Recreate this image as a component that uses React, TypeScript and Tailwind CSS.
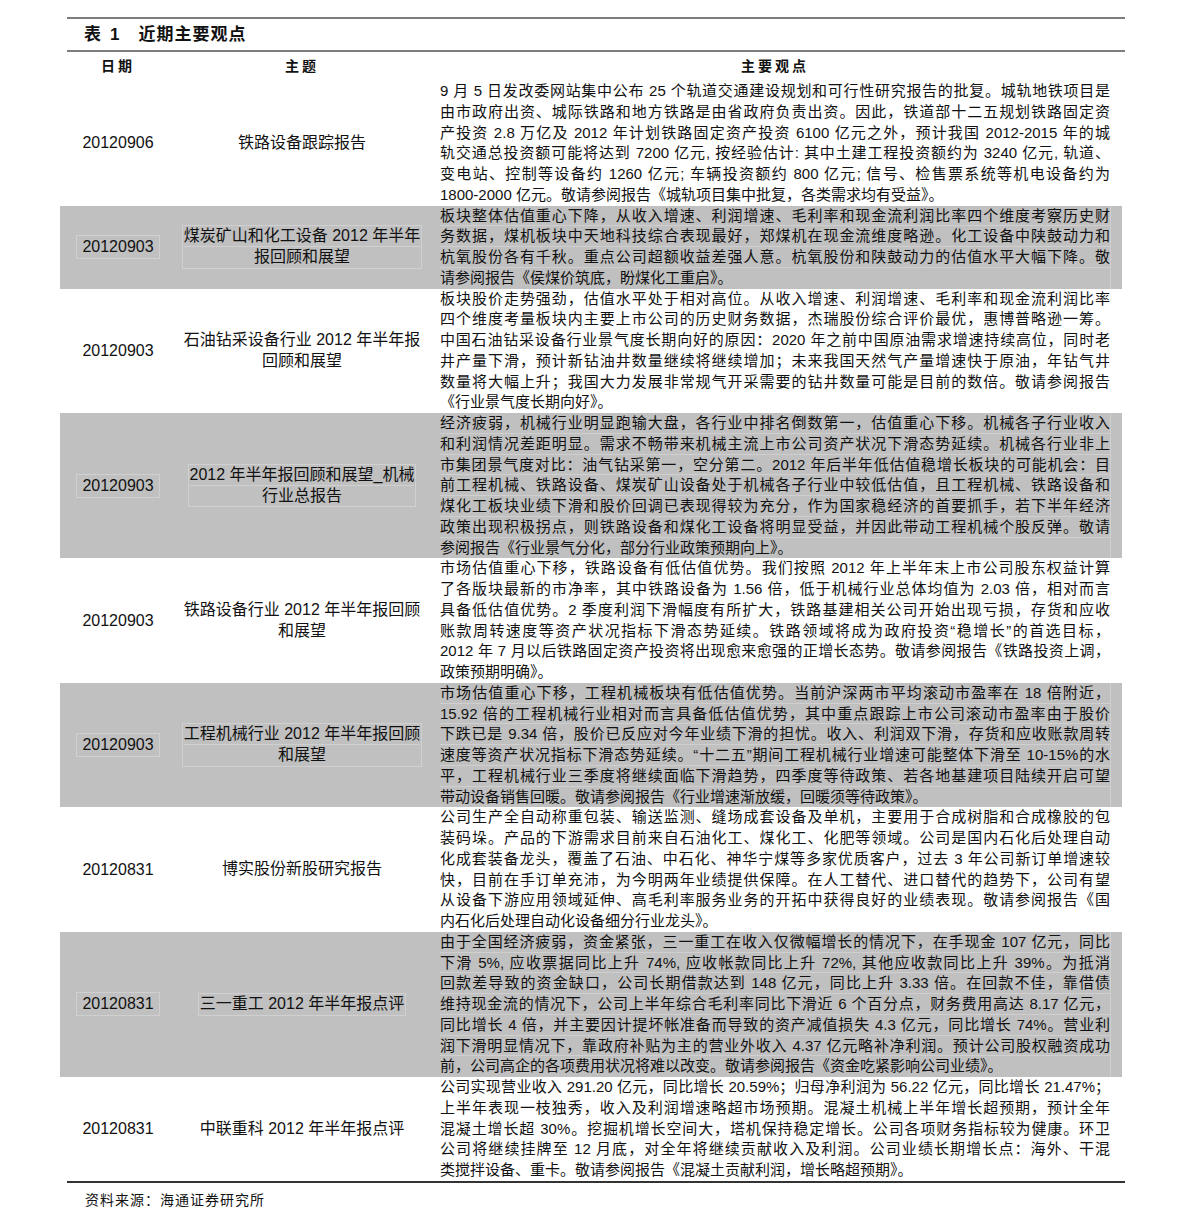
import React from 'react';

type Row = {
  date: string;
  topic: string[];
  lines: string[];
  shaded?: boolean;
};

const rows: Row[] = [
  {
    date: '20120906',
    topic: ['铁路设备跟踪报告'],
    lines: [
      '9 月 5 日发改委网站集中公布 25 个轨道交通建设规划和可行性研究报告的批复。城轨地铁项目是',
      '由市政府出资、城际铁路和地方铁路是由省政府负责出资。因此，铁道部十二五规划铁路固定资',
      '产投资 2.8 万亿及 2012 年计划铁路固定资产投资 6100 亿元之外，预计我国 2012-2015 年的城',
      '轨交通总投资额可能将达到 7200 亿元, 按经验估计: 其中土建工程投资额约为 3240 亿元, 轨道、',
      '变电站、控制等设备约 1260 亿元; 车辆投资额约 800 亿元; 信号、检售票系统等机电设备约为',
      '1800-2000 亿元。敬请参阅报告《城轨项目集中批复，各类需求均有受益》。',
    ],
  },
  {
    date: '20120903',
    topic: ['煤炭矿山和化工设备 2012 年半年', '报回顾和展望'],
    shaded: true,
    lines: [
      '板块整体估值重心下降，从收入增速、利润增速、毛利率和现金流利润比率四个维度考察历史财',
      '务数据，煤机板块中天地科技综合表现最好，郑煤机在现金流维度略逊。化工设备中陕鼓动力和',
      '杭氧股份各有千秋。重点公司超额收益差强人意。杭氧股份和陕鼓动力的估值水平大幅下降。敬',
      '请参阅报告《侯煤价筑底，盼煤化工重启》。',
    ],
  },
  {
    date: '20120903',
    topic: ['石油钻采设备行业 2012 年半年报', '回顾和展望'],
    lines: [
      '板块股价走势强劲，估值水平处于相对高位。从收入增速、利润增速、毛利率和现金流利润比率',
      '四个维度考量板块内主要上市公司的历史财务数据，杰瑞股份综合评价最优，惠博普略逊一筹。',
      '中国石油钻采设备行业景气度长期向好的原因：2020 年之前中国原油需求增速持续高位，同时老',
      '井产量下滑，预计新钻油井数量继续将继续增加；未来我国天然气产量增速快于原油，年钻气井',
      '数量将大幅上升；我国大力发展非常规气开采需要的钻井数量可能是目前的数倍。敬请参阅报告',
      '《行业景气度长期向好》。',
    ],
  },
  {
    date: '20120903',
    topic: ['2012 年半年报回顾和展望_机械', '行业总报告'],
    shaded: true,
    lines: [
      '经济疲弱，机械行业明显跑输大盘，各行业中排名倒数第一，估值重心下移。机械各子行业收入',
      '和利润情况差距明显。需求不畅带来机械主流上市公司资产状况下滑态势延续。机械各行业非上',
      '市集团景气度对比：油气钻采第一，空分第二。2012 年后半年低估值稳增长板块的可能机会：目',
      '前工程机械、铁路设备、煤炭矿山设备处于机械各子行业中较低估值，且工程机械、铁路设备和',
      '煤化工板块业绩下滑和股价回调已表现得较为充分，作为国家稳经济的首要抓手，若下半年经济',
      '政策出现积极拐点，则铁路设备和煤化工设备将明显受益，并因此带动工程机械个股反弹。敬请',
      '参阅报告《行业景气分化，部分行业政策预期向上》。',
    ],
  },
  {
    date: '20120903',
    topic: ['铁路设备行业 2012 年半年报回顾', '和展望'],
    lines: [
      '市场估值重心下移，铁路设备有低估值优势。我们按照 2012 年上半年末上市公司股东权益计算',
      '了各版块最新的市净率，其中铁路设备为 1.56 倍，低于机械行业总体均值为 2.03 倍，相对而言',
      '具备低估值优势。2 季度利润下滑幅度有所扩大，铁路基建相关公司开始出现亏损，存货和应收',
      '账款周转速度等资产状况指标下滑态势延续。铁路领域将成为政府投资“稳增长”的首选目标，',
      '2012 年 7 月以后铁路固定资产投资将出现愈来愈强的正增长态势。敬请参阅报告《铁路投资上调，',
      '政策预期明确》。',
    ],
  },
  {
    date: '20120903',
    topic: ['工程机械行业 2012 年半年报回顾', '和展望'],
    shaded: true,
    lines: [
      '市场估值重心下移，工程机械板块有低估值优势。当前沪深两市平均滚动市盈率在 18 倍附近，',
      '15.92 倍的工程机械行业相对而言具备低估值优势，其中重点跟踪上市公司滚动市盈率由于股价',
      '下跌已是 9.34 倍，股价已反应对今年业绩下滑的担忧。收入、利润双下滑，存货和应收账款周转',
      '速度等资产状况指标下滑态势延续。“十二五”期间工程机械行业增速可能整体下滑至 10-15%的水',
      '平，工程机械行业三季度将继续面临下滑趋势，四季度等待政策、若各地基建项目陆续开启可望',
      '带动设备销售回暖。敬请参阅报告《行业增速渐放缓，回暖须等待政策》。',
    ],
  },
  {
    date: '20120831',
    topic: ['博实股份新股研究报告'],
    lines: [
      '公司生产全自动称重包装、输送监测、缝场成套设备及单机，主要用于合成树脂和合成橡胶的包',
      '装码垛。产品的下游需求目前来自石油化工、煤化工、化肥等领域。公司是国内石化后处理自动',
      '化成套装备龙头，覆盖了石油、中石化、神华宁煤等多家优质客户，过去 3 年公司新订单增速较',
      '快，目前在手订单充沛，为今明两年业绩提供保障。在人工替代、进口替代的趋势下，公司有望',
      '从设备下游应用领域延伸、高毛利率服务业务的开拓中获得良好的业绩表现。敬请参阅报告《国',
      '内石化后处理自动化设备细分行业龙头》。',
    ],
  },
  {
    date: '20120831',
    topic: ['三一重工 2012 年半年报点评'],
    shaded: true,
    lines: [
      '由于全国经济疲弱，资金紧张，三一重工在收入仅微幅增长的情况下，在手现金 107 亿元，同比',
      '下滑 5%, 应收票据同比上升 74%, 应收帐款同比上升 72%, 其他应收款同比上升 39%。为抵消',
      '回款差导致的资金缺口，公司长期借款达到 148 亿元，同比上升 3.33 倍。在回款不佳，靠借债',
      '维持现金流的情况下，公司上半年综合毛利率同比下滑近 6 个百分点，财务费用高达 8.17 亿元，',
      '同比增长 4 倍，并主要因计提坏帐准备而导致的资产减值损失 4.3 亿元，同比增长 74%。营业利',
      '润下滑明显情况下，靠政府补贴为主的营业外收入 4.37 亿元略补净利润。预计公司股权融资成功',
      '前，公司高企的各项费用状况将难以改变。敬请参阅报告《资金吃紧影响公司业绩》。',
    ],
  },
  {
    date: '20120831',
    topic: ['中联重科 2012 年半年报点评'],
    lines: [
      '公司实现营业收入 291.20 亿元，同比增长 20.59%；归母净利润为 56.22 亿元，同比增长 21.47%；',
      '上半年表现一枝独秀，收入及利润增速略超市场预期。混凝土机械上半年增长超预期，预计全年',
      '混凝土增长超 30%。挖掘机增长空间大，塔机保持稳定增长。公司各项财务指标较为健康。环卫',
      '公司将继续挂牌至 12 月底，对全年将继续贡献收入及利润。公司业绩长期增长点：海外、干混',
      '类搅拌设备、重卡。敬请参阅报告《混凝土贡献利润，增长略超预期》。',
    ],
  },
];

const TableRow: React.FC<{ row: Row }> = ({ row }) => {
  const box = row.shaded ? 'shadow-[0_0_0_1px_#d0d0d0]' : '';
  return (
    <div className={`flex w-[1062px] ${row.shaded ? 'bg-[#c0c0c0]' : ''}`}>
      <div className="w-[116px] flex items-center justify-center">
        <span className={`text-[16px] leading-[22px] px-[5px] ${box}`}>{row.date}</span>
      </div>
      <div className="w-[252px] flex items-center justify-center">
        <div className={`text-center text-[16px] leading-[20.75px] px-[1px] ${box}`}>
          {row.topic.map((t, i) => (
            <div key={i} className={row.shaded && i < row.topic.length - 1 ? 'shadow-[inset_0_-1px_0_#d0d0d0]' : ''}>
              {t}
            </div>
          ))}
        </div>
      </div>
      <div className="flex-1 pl-[12px] pr-[12px]">
        <div className={`text-[15px] leading-[20.75px] ${row.shaded ? 'shadow-[1px_0_0_#d0d0d0]' : ''}`}>
          {row.lines.map((line, i) => {
            const last = i === row.lines.length - 1;
            return (
              <div
                key={i}
                className={`${last ? 'text-left' : 'text-justify [text-align-last:justify]'} ${
                  row.shaded && !last ? 'shadow-[inset_0_-1px_0_#cfcfcf]' : ''
                }`}
              >
                {line}
              </div>
            );
          })}
        </div>
      </div>
    </div>
  );
};

export default function App() {
  return (
    <div className="min-h-[1225px] w-[1191px] bg-white text-[#111] font-['Liberation_Sans','Noto_Sans_CJK_SC',sans-serif]">
      <div className="ml-[60px] w-[1065px] pt-[17px]">
        <div className="ml-[7px] h-[2px] bg-[#7d7d7d]" />
        <div className="h-[31px] flex items-center pl-[24px] text-[17px] font-bold">
          <span>表</span>
          <span className="ml-[9px]">1</span>
          <span className="ml-[19px] tracking-[1px]">近期主要观点</span>
        </div>
        <div className="ml-[7px] h-[2px] bg-[#7d7d7d]" />
        <div className="flex h-[29px] items-center text-[14px] font-bold w-[1062px]">
          <div className="w-[116px] text-center tracking-[3px]">日期</div>
          <div className="w-[252px] text-center tracking-[3px]">主题</div>
          <div className="flex-1 text-center tracking-[3px]">主要观点</div>
        </div>
        {rows.map((row, i) => (
          <TableRow key={i} row={row} />
        ))}
        <div className="ml-[7px] h-[2px] bg-[#333]" />
        <div className="pl-[25px] pt-[7px] text-[14px] tracking-[1px]">资料来源：海通证券研究所</div>
      </div>
    </div>
  );
}
